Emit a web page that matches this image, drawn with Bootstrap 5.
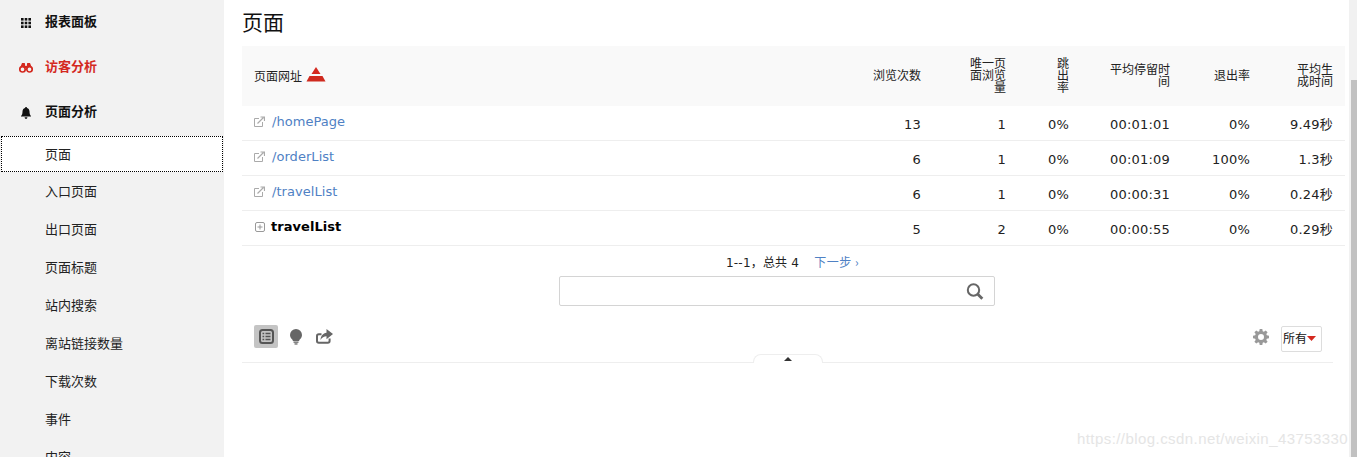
<!DOCTYPE html>
<html lang="zh">
<head>
<meta charset="utf-8">
<title>页面</title>
<link rel="stylesheet" href="https://cdn.jsdelivr.net/npm/bootstrap@5.3.0/dist/css/bootstrap.min.css">
<style>
html,body{height:457px;overflow:hidden;margin:0}
body{font-family:"DejaVu Sans","Noto Sans CJK SC",sans-serif;font-size:13px;color:#0d0d0d;background:#fff}
.shell{height:457px;position:relative}
.side{width:224px;flex:none;background:#f2f2f2;height:457px;overflow:hidden;font-family:"Noto Sans CJK SC",sans-serif;font-size:13px;color:#222}
.grp{height:45px;flex:none;padding:0 0 3px 45px;font-weight:700;position:relative;color:#111}
.grp.active-grp{color:#d4291f}
.grp svg{position:absolute;left:21px;top:50%;transform:translateY(-50%)}
.subi{height:38px;padding:0 0 2px 45px;flex:none}
.subi.current{height:36px;margin:1px;padding:0 0 1px 43px;background:#fff;border:1px dotted #000}
.panel{flex:1;min-width:0;padding:0 12px 0 18px}
.title-h{font-family:"Noto Sans CJK SC",sans-serif;font-size:21px;font-weight:400;height:46px;line-height:42px;margin:0;color:#111}
.rep{width:1103px;table-layout:fixed;margin:0;border-collapse:separate;border-spacing:0}
.rep th{background:#f9f9f9;height:60px;padding:0 12px 2px 28px;font-family:"Noto Sans CJK SC",sans-serif;font-size:12px;font-weight:400;line-height:12px;text-align:right;vertical-align:middle;border:0;color:#222}
.rep td{height:35px;padding:4px 12px 0;text-align:right;vertical-align:middle;border-bottom:1px solid #eee;font-size:13px;color:#222;letter-spacing:.2px;line-height:18px}
.rep td.lbl{text-align:left;padding:0 12px 2px}
.rep th.lbl{text-align:left;padding:0 12px 2px}
.rep a{color:#4f81c4;text-decoration:none;font-size:13px;letter-spacing:.05px}
.rep b{color:#000;font-size:13px;letter-spacing:.05px}
.rep td svg{margin-right:7px;vertical-align:-1px}
.rep td svg.plus{margin-right:6px}
.sorticon{display:inline-block;vertical-align:-3px;margin-left:1px}
.cn{font-family:"Noto Sans CJK SC",sans-serif;line-height:1}
.pager{height:30px;padding:7px 0 0 10px;font-size:12px;line-height:17px;width:1091px;text-align:center}
.pager span{color:#222;letter-spacing:.2px}
.pager a{color:#4f81c4;text-decoration:none;margin-left:15px;font-family:"Noto Sans CJK SC",sans-serif;letter-spacing:.5px}
.seek{width:436px;height:30px;margin-left:317px;border:1px solid #d4d4d4;border-radius:2px;padding:0 10px 0 0}
.tools{width:1091px;height:57px;padding:5px 11px 0 12px;border-bottom:1px solid #eee;position:relative}
.toolon{width:24px;height:23px;background:#c4c4c4;border-radius:2px}
.allbtn{width:41px;height:26px;border:1px solid #ddd;border-radius:2px;font-family:"Noto Sans CJK SC",sans-serif;font-size:12px;color:#111;margin:5px 0 0 12px;padding:0 0 2px 1px}
.tab-up{position:absolute;left:511px;bottom:-1px;width:70px;height:9px;background:#fff;border:1px solid #eee;border-bottom:0;border-radius:8px 8px 0 0}
.tab-up i{position:absolute;left:30px;top:2px;width:0;height:0;border-left:4px solid transparent;border-right:4px solid transparent;border-bottom:4px solid #333}
.wm{position:absolute;left:1077px;top:428px;font-family:"Liberation Sans",sans-serif;font-size:15px;letter-spacing:.43px;color:#e5e5e5;white-space:nowrap}
.sbar{position:absolute;right:0;top:0;width:8px;height:457px;background:#f1f1f1}
.sbar i{position:absolute;left:2px;right:0;top:80px;bottom:0;background:#c1c1c1}
</style>
</head>
<body>
<div class="shell d-flex">
  <nav class="side d-flex flex-column">
    <div class="grp d-flex align-items-center">
      <svg width="10" height="10" viewBox="0 0 10 10" fill="#111"><rect x="0" y="0" width="2.6" height="2.6"/><rect x="3.700" y="0" width="2.6" height="2.6"/><rect x="7.400" y="0" width="2.6" height="2.6"/><rect x="0" y="3.700" width="2.6" height="2.6"/><rect x="3.700" y="3.700" width="2.6" height="2.6"/><rect x="7.400" y="3.700" width="2.6" height="2.6"/><rect x="0" y="7.400" width="2.6" height="2.6"/><rect x="3.700" y="7.400" width="2.6" height="2.6"/><rect x="7.400" y="7.400" width="2.6" height="2.6"/></svg>
      报表面板</div>
    <div class="grp active-grp d-flex align-items-center">
      <svg width="14" height="10" viewBox="0 0 14 10" style="left:19px"><path d="M3 0h2.800L6.300 3h1.400l.5-3H11l2 5H1z" fill="#d4291f"/><circle cx="3.500" cy="6.300" r="2.700" fill="#f2f2f2" stroke="#d4291f" stroke-width="1.700"/><circle cx="10.500" cy="6.300" r="2.700" fill="#f2f2f2" stroke="#d4291f" stroke-width="1.700"/></svg>
      访客分析</div>
    <div class="grp d-flex align-items-center">
      <svg width="10" height="12" viewBox="0 0 10 12"><path d="M5 0c.6 0 1 .4 1 .9C7.700 1.400 8.500 2.800 8.500 4.600c0 2.300.5 3.600 1.500 4.400v.6H0V9c1-.8 1.500-2.100 1.500-4.400C1.500 2.800 2.300 1.400 4 .9 4 .4 4.400 0 5 0z" fill="#111"/><path d="M3.600 10.300h2.800C6.300 11.300 5.700 12 5 12s-1.300-.7-1.400-1.700z" fill="#111"/></svg>
      页面分析</div>
    <div class="subi current d-flex align-items-center">页面</div>
    <div class="subi d-flex align-items-center">入口页面</div>
    <div class="subi d-flex align-items-center">出口页面</div>
    <div class="subi d-flex align-items-center">页面标题</div>
    <div class="subi d-flex align-items-center">站内搜索</div>
    <div class="subi d-flex align-items-center">离站链接数量</div>
    <div class="subi d-flex align-items-center">下载次数</div>
    <div class="subi d-flex align-items-center">事件</div>
    <div class="subi d-flex align-items-center">内容</div>
  </nav>
  <main class="panel">
    <h1 class="title-h">页面</h1>
    <table class="table rep">
      <colgroup><col style="width:599px"><col style="width:92px"><col style="width:85px"><col style="width:63px"><col style="width:101px"><col style="width:80px"><col style="width:83px"></colgroup>
      <thead><tr>
        <th class="lbl">页面网址 <svg class="sorticon" width="20" height="17" viewBox="0 0 20 17"><path d="M10 0l4.500 7h-9z" fill="#d4291f"/><path d="M3.500 9h13l3 5.500H.5z" fill="#cf2a1f"/></svg></th>
        <th>浏览次数</th><th>唯一页面浏览量</th><th>跳出率</th><th>平均停留时间</th><th>退出率</th><th>平均生成时间</th>
      </tr></thead>
      <tbody>
        <tr><td class="lbl"><svg width="11" height="11" viewBox="0 0 11 11" fill="none" stroke="#aaa"><path d="M8.500 6v4.500h-8v-8H5"/><path d="M3.500 7.500L9.500 1.500M6.500 1h4v4" stroke-width="1.200"/></svg><a href="#">/homePage</a></td><td>13</td><td>1</td><td>0%</td><td>00:01:01</td><td>0%</td><td>9.49<span class="cn">秒</span></td></tr>
        <tr><td class="lbl"><svg width="11" height="11" viewBox="0 0 11 11" fill="none" stroke="#aaa"><path d="M8.500 6v4.500h-8v-8H5"/><path d="M3.500 7.500L9.500 1.500M6.500 1h4v4" stroke-width="1.200"/></svg><a href="#">/orderList</a></td><td>6</td><td>1</td><td>0%</td><td>00:01:09</td><td>100%</td><td>1.3<span class="cn">秒</span></td></tr>
        <tr><td class="lbl"><svg width="11" height="11" viewBox="0 0 11 11" fill="none" stroke="#aaa"><path d="M8.500 6v4.500h-8v-8H5"/><path d="M3.500 7.500L9.500 1.500M6.500 1h4v4" stroke-width="1.200"/></svg><a href="#">/travelList</a></td><td>6</td><td>1</td><td>0%</td><td>00:00:31</td><td>0%</td><td>0.24<span class="cn">秒</span></td></tr>
        <tr><td class="lbl"><svg class="plus" width="11" height="10" viewBox="0 0 11 10" fill="none" stroke="#999"><rect x="1.500" y=".5" width="9" height="9" rx="1.500"/><path d="M3.500 5h5M6 2.500v5"/></svg><b>travelList</b></td><td>5</td><td>2</td><td>0%</td><td>00:00:55</td><td>0%</td><td>0.29<span class="cn">秒</span></td></tr>
      </tbody>
    </table>
    <div class="pager"><span>1--1<span class="cn">，总共</span> 4</span><a href="#">下一步 ›</a></div>
    <div class="seek d-flex align-items-center justify-content-end">
      <svg width="18" height="17" viewBox="0 0 18 17" fill="none" stroke="#666"><circle cx="7.500" cy="7" r="5.700" stroke-width="2"/><path d="M11.800 11.300l4.500 4.500" stroke-width="2.800"/></svg>
    </div>
    <div class="tools d-flex align-items-center">
      <div class="toolon d-flex align-items-center justify-content-center"><svg width="15" height="15" viewBox="0 0 15 15" fill="none" stroke="#555"><rect x="1" y="1" width="13" height="13" rx="2.500" stroke-width="2"/><path d="M3.500 4.500h1.700M6.500 4.500h5M3.500 7.500h1.700M6.500 7.500h5M3.500 10.500h1.700M6.500 10.500h5" stroke-width="1.700"/></svg></div>
      <svg style="margin-left:12px" width="12" height="16" viewBox="0 0 12 16" fill="#666"><path d="M6 0a6 6 0 0 1 6 6c0 2-1 3.200-2 4.300-.5.500-.8 1-.9 1.700H2.900c-.1-.7-.4-1.200-.9-1.700C1 9.200 0 8 0 6a6 6 0 0 1 6-6z"/><rect x="3.500" y="12.500" width="5" height="1.300"/><rect x="4.500" y="14.300" width="3" height="1.300"/></svg>
      <svg style="margin-left:14px" width="17" height="15" viewBox="0 0 17 15"><path d="M5.500 5.200H2.800C1.800 5.200 1 6 1 7v5c0 1 .8 1.800 1.800 1.800h9c1 0 1.800-.8 1.800-1.800V9.500" fill="none" stroke="#666" stroke-width="2"/><path d="M10.500 0L17 5l-6.500 5.200V7.300C8 7.300 6 8.500 4.500 11c.2-4 2.500-6.800 6-7.200z" fill="#666"/></svg>
      <svg class="ms-auto" width="16" height="16" viewBox="0 0 16 16" fill="#999"><path fill-rule="evenodd" d="M6.700 0h2.600l.4 2.200 1.200.5L12.700 1.400l1.900 1.900-1.300 1.800.5 1.200 2.200.4v2.600l-2.200.4-.5 1.200 1.300 1.800-1.900 1.900-1.800-1.300-1.200.5-.4 2.200H6.700l-.4-2.200-1.200-.5-1.800 1.300-1.900-1.900 1.300-1.800-.5-1.200L0 9.300V6.700l2.200-.4.500-1.200-1.300-1.800 1.900-1.900 1.800 1.300 1.200-.5zM8 5a3 3 0 1 0 0 6 3 3 0 0 0 0-6z"/></svg>
      <div class="allbtn d-flex align-items-center">所有<svg width="9" height="5" viewBox="0 0 9 5"><path d="M0 0h9L4.500 5z" fill="#d4291f"/></svg></div>
      <div class="tab-up"><i></i></div>
    </div>
  </main>
  <div class="sbar"><i></i></div>
  <div class="wm">https://blog.csdn.net/weixin_43753330</div>
</div>
</body>
</html>
